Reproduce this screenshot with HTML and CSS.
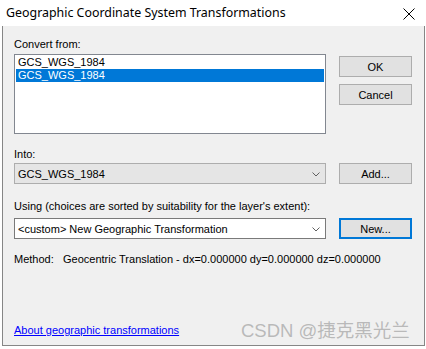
FILE: index.html
```html
<!DOCTYPE html>
<html lang="en">
<head>
    <meta charset="UTF-8">
    <meta name="viewport" content="width=device-width, initial-scale=1.0">
    <title>Geographic Coordinate System Transformations</title>
    <link rel="stylesheet" href="styles.css">
</head>
<body>
    <div class="window">
        <div class="titlebar">
            <span class="title">Geographic Coordinate System Transformations</span>
            <svg class="close" width="12" height="12" viewBox="0 0 12 12">
                <path d="M0.5 0.5 L11.5 11.5 M11.5 0.5 L0.5 11.5" stroke="#000" stroke-width="1" fill="none"/>
            </svg>
        </div>

        <div class="content">
            <!-- Convert from -->
            <div class="row">
                <div class="main">
                    <div class="field-label">Convert from:</div>
                    <div class="listbox">
                        <div class="item">GCS_WGS_1984</div>
                        <div class="item selected">GCS_WGS_1984</div>
                    </div>
                </div>
                <div class="side side-top">
                    <button class="btn">OK</button>
                    <button class="btn">Cancel</button>
                </div>
            </div>

            <!-- Into -->
            <div class="field-label into-label">Into:</div>
            <div class="row">
                <div class="combo combo-disabled">
                    <span>GCS_WGS_1984</span>
                    <svg class="chevron" width="8" height="5" viewBox="0 0 8 5">
                        <path d="M0.5 0.5 L4 4 L7.5 0.5" stroke="#606060" stroke-width="1" fill="none"/>
                    </svg>
                </div>
                <button class="btn">Add...</button>
            </div>

            <!-- Using -->
            <div class="field-label using-label">Using (choices are sorted by suitability for the layer's extent):</div>
            <div class="row">
                <div class="combo">
                    <span>&lt;custom&gt; New Geographic Transformation</span>
                    <svg class="chevron" width="8" height="5" viewBox="0 0 8 5">
                        <path d="M0.5 0.5 L4 4 L7.5 0.5" stroke="#606060" stroke-width="1" fill="none"/>
                    </svg>
                </div>
                <button class="btn btn-default">New...</button>
            </div>

            <div class="method">
                <span class="method-name">Method:</span>
                <span>Geocentric Translation - dx=0.000000 dy=0.000000 dz=0.000000</span>
            </div>

            <div class="footer">
                <a href="#" class="about-link">About geographic transformations</a>
            </div>

            <div class="watermark">CSDN @捷克黑光兰</div>
        </div>
    </div>
</body>
</html>
```

FILE: styles.css
```css
body {
    margin: 0;
    background-color: #ffffff;
    font-family: 'Liberation Sans', Arial, sans-serif;
    font-size: 11px;
    color: #000000;
}

.window {
    margin-left: 2px;
    width: 423px;
    height: 346px;
    box-sizing: border-box;
    border: 1px solid #868686;
    border-top: none;
    display: flex;
    flex-direction: column;
}

.titlebar {
    height: 26px;
    background-color: #ffffff;
    display: flex;
    align-items: center;
    justify-content: space-between;
    padding: 0 10px 0 4px;
    margin: 0 -1px;
}

.title {
    font-family: 'Noto Sans', 'Open Sans', sans-serif;
    font-size: 12.4px;
    padding-bottom: 1px;
}

.close {
    margin-top: 1px;
}

.content {
    flex: 1;
    position: relative;
    background-color: #f0f0f0;
    padding: 12px 0 0 11px;
    display: flex;
    flex-direction: column;
}

.row {
    display: flex;
    gap: 13px;
}

.main {
    width: 312px;
}

.side {
    display: flex;
    flex-direction: column;
    gap: 7px;
}

.side-top {
    padding-top: 18px;
}

.field-label {
    height: 13px;
    line-height: 13px;
}

.listbox {
    margin-top: 3px;
    height: 80px;
    box-sizing: border-box;
    background-color: #ffffff;
    border: 1px solid #828790;
    padding: 1px;
}

.item {
    height: 13px;
    line-height: 13px;
    padding-left: 2px;
}

.item.selected {
    background-color: #0078d7;
    color: #ffffff;
}

.btn {
    width: 73px;
    height: 21px;
    box-sizing: border-box;
    background-color: #e1e1e1;
    border: 1px solid #adadad;
    font-family: 'Liberation Sans', Arial, sans-serif;
    font-size: 11px;
    color: #000000;
    padding: 0;
}

.btn-default {
    border: 2px solid #0078d7;
}

.into-label {
    margin-top: 14px;
    margin-bottom: 2px;
}

.using-label {
    margin-top: 16px;
    margin-bottom: 5px;
}

.combo {
    width: 312px;
    height: 21px;
    box-sizing: border-box;
    background-color: #ffffff;
    border: 1px solid #7a7a7a;
    display: flex;
    align-items: center;
    justify-content: space-between;
    padding: 0 5px 0 3px;
}

.combo-disabled {
    background-color: #e5e5e5;
    border-color: #adadad;
}

.chevron {
    margin-top: 1px;
}

.method {
    margin-top: 14px;
    height: 13px;
    line-height: 13px;
    display: flex;
}

.method-name {
    width: 49px;
}

.footer {
    margin-top: auto;
    padding-bottom: 9px;
}

.about-link {
    color: #0000ff;
    text-decoration: underline;
}

.watermark {
    position: absolute;
    left: 238px;
    bottom: 3px;
    font-family: 'Liberation Sans', 'Noto Sans CJK SC', sans-serif;
    font-size: 18.5px;
    color: rgba(130, 130, 130, 0.5);
    white-space: nowrap;
}
```
